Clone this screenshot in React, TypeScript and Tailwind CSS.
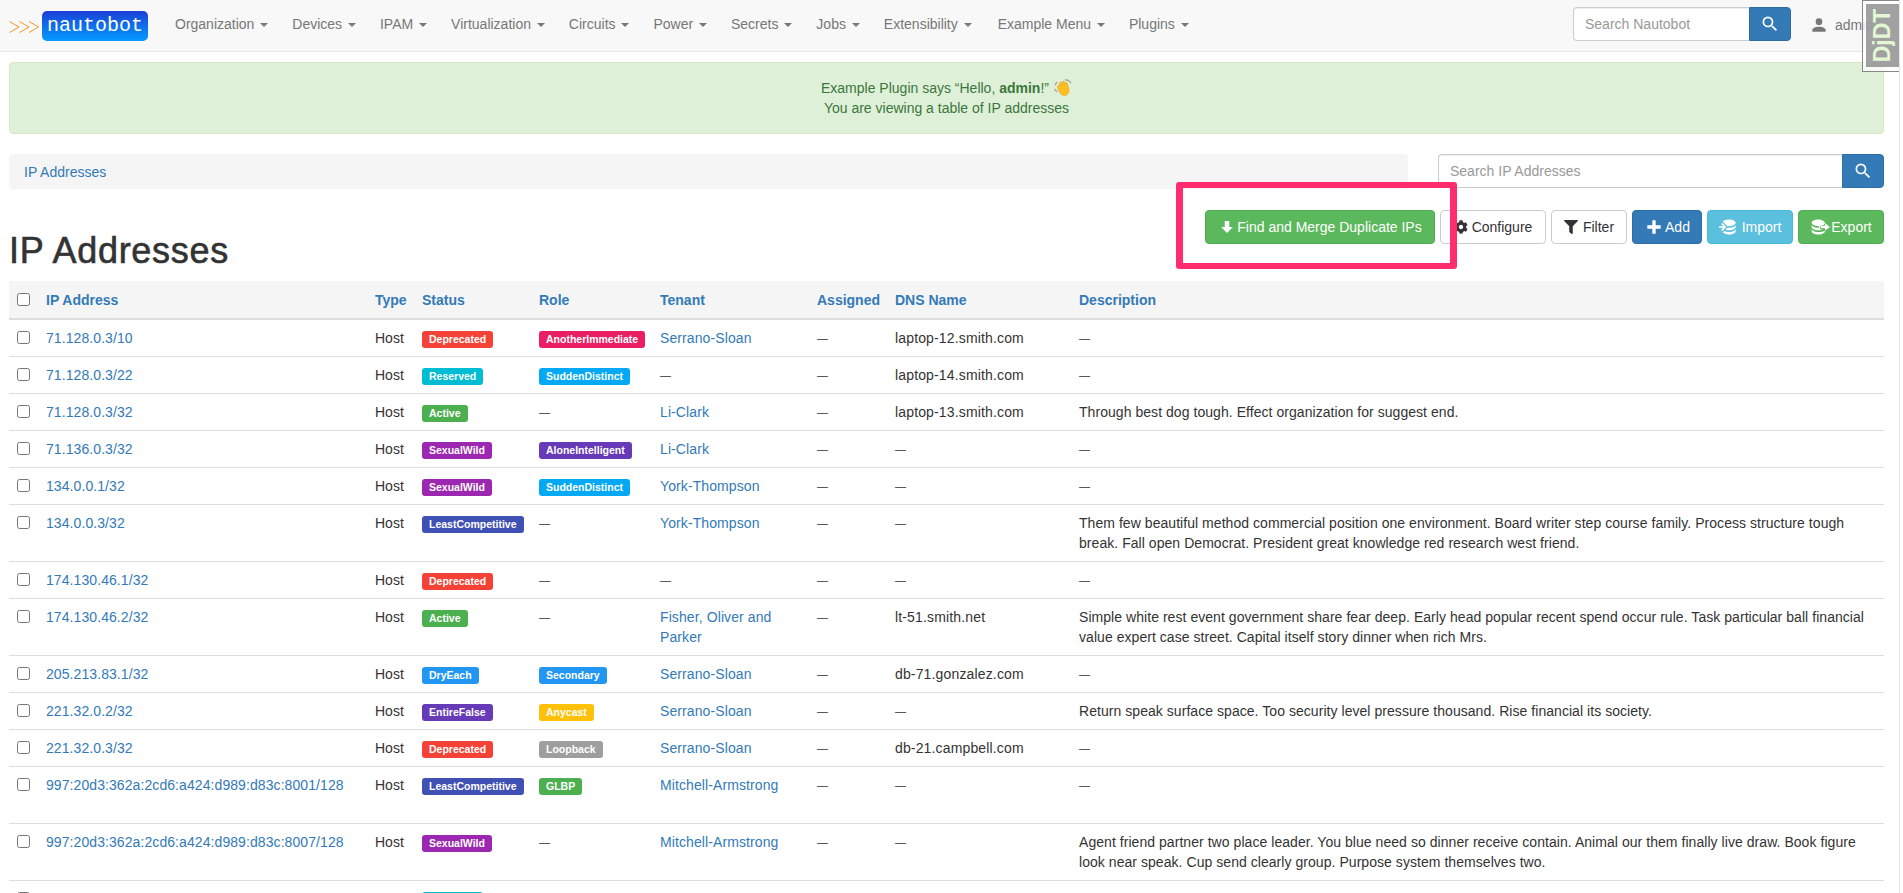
import { FaCog, FaFilter } from 'react-icons/fa'

const navItems = ['Organization', 'Devices', 'IPAM', 'Virtualization', 'Circuits', 'Power', 'Secrets', 'Jobs', 'Extensibility', 'Example Menu', 'Plugins']

const colors: Record<string, string> = {
  Deprecated: 'bg-[#f44336]',
  Reserved: 'bg-[#00bcd4]',
  Active: 'bg-[#4caf50]',
  SexualWild: 'bg-[#9c27b0]',
  LeastCompetitive: 'bg-[#3f51b5]',
  DryEach: 'bg-[#2196f3]',
  EntireFalse: 'bg-[#673ab7]',
  AnotherImmediate: 'bg-[#e91e63]',
  SuddenDistinct: 'bg-[#03a9f4]',
  AloneIntelligent: 'bg-[#673ab7]',
  Secondary: 'bg-[#2196f3]',
  Anycast: 'bg-[#ffc107] text-black',
  Loopback: 'bg-[#9e9e9e]',
  GLBP: 'bg-[#4caf50]',
}

type Row = { ip: string; status: string; role?: string; tenant?: string; dns?: string; desc?: string; tall?: boolean }

const rows: Row[] = [
  { ip: '71.128.0.3/10', status: 'Deprecated', role: 'AnotherImmediate', tenant: 'Serrano-Sloan', dns: 'laptop-12.smith.com' },
  { ip: '71.128.0.3/22', status: 'Reserved', role: 'SuddenDistinct', dns: 'laptop-14.smith.com' },
  { ip: '71.128.0.3/32', status: 'Active', tenant: 'Li-Clark', dns: 'laptop-13.smith.com', desc: 'Through best dog tough. Effect organization for suggest end.' },
  { ip: '71.136.0.3/32', status: 'SexualWild', role: 'AloneIntelligent', tenant: 'Li-Clark' },
  { ip: '134.0.0.1/32', status: 'SexualWild', role: 'SuddenDistinct', tenant: 'York-Thompson' },
  {
    ip: '134.0.0.3/32',
    status: 'LeastCompetitive',
    tenant: 'York-Thompson',
    desc: 'Them few beautiful method commercial position one environment. Board writer step course family. Process structure tough break. Fall open Democrat. President great knowledge red research west friend.',
  },
  { ip: '174.130.46.1/32', status: 'Deprecated' },
  {
    ip: '174.130.46.2/32',
    status: 'Active',
    tenant: 'Fisher, Oliver and Parker',
    dns: 'lt-51.smith.net',
    desc: 'Simple white rest event government share fear deep. Early head popular recent spend occur rule. Task particular ball financial value expert case street. Capital itself story dinner when rich Mrs.',
  },
  { ip: '205.213.83.1/32', status: 'DryEach', role: 'Secondary', tenant: 'Serrano-Sloan', dns: 'db-71.gonzalez.com' },
  { ip: '221.32.0.2/32', status: 'EntireFalse', role: 'Anycast', tenant: 'Serrano-Sloan', desc: 'Return speak surface space. Too security level pressure thousand. Rise financial its society.' },
  { ip: '221.32.0.3/32', status: 'Deprecated', role: 'Loopback', tenant: 'Serrano-Sloan', dns: 'db-21.campbell.com' },
  { ip: '997:20d3:362a:2cd6:a424:d989:d83c:8001/128', status: 'LeastCompetitive', role: 'GLBP', tenant: 'Mitchell-Armstrong', tall: true },
  {
    ip: '997:20d3:362a:2cd6:a424:d989:d83c:8007/128',
    status: 'SexualWild',
    tenant: 'Mitchell-Armstrong',
    desc: 'Agent friend partner two place leader. You blue need so dinner receive contain. Animal our them finally live draw. Book figure look near speak. Cup send clearly group. Purpose system themselves two.',
  },
]

const Mdi = ({ d, className }: { d: string; className: string }) => (
  <svg viewBox="0 0 24 24" fill="currentColor" className={className}>
    <path d={d} />
  </svg>
)

const magnify =
  'M9.5,3A6.5,6.5 0 0,1 16,9.5C16,11.11 15.41,12.59 14.44,13.73L14.71,14H15.5L20.5,19L19,20.5L14,15.5V14.71L13.73,14.44C12.59,15.41 11.11,16 9.5,16A6.5,6.5 0 0,1 3,9.5A6.5,6.5 0 0,1 9.5,3M9.5,5C7,5 5,7 5,9.5C5,12 7,14 9.5,14C12,14 14,12 14,9.5C14,7 12,5 9.5,5Z'
const account = 'M12,4A4,4 0 0,1 16,8A4,4 0 0,1 12,12A4,4 0 0,1 8,8A4,4 0 0,1 12,4M12,14C16.42,14 20,15.79 20,18V20H4V18C4,15.79 7.58,14 12,14Z'
const arrowDown = 'M9,4H15V12H19.84L12,19.84L4.16,12H9V4Z'
const plus = 'M20 14H14V20H10V14H4V10H10V4H14V10H20V14Z'
const dbImport =
  'M12,3C8.59,3 5.69,4.07 4.54,5.57L9.79,10.82C10.5,10.93 11.22,11 12,11C16.42,11 20,9.21 20,7C20,4.79 16.42,3 12,3M3.92,7.08L2.5,8.5L5,11H0V13H5L2.5,15.5L3.92,16.92L8.84,12M20,9C20,11.21 16.42,13 12,13C11.34,13 10.7,12.95 10.09,12.87L7.62,15.34C8.93,15.75 10.42,16 12,16C16.42,16 20,14.21 20,12M20,14C20,16.21 16.42,18 12,18C9.72,18 7.67,17.5 6.21,16.75L4.53,18.43C5.67,19.93 8.59,21 12,21C16.42,21 20,19.21 20,17'
const dbExport =
  'M10,3C5.58,3 2,4.79 2,7C2,9.21 5.58,11 10,11C11.6,11 13.1,10.76 14.35,10.35L14,9.5H16.5L18,7.6C17.6,5.1 14.2,3 10,3M2,9V12C2,14.21 5.58,16 10,16C11.2,16 12.35,15.87 13.4,15.63L14,14.5H12V10.9C11.35,10.97 10.68,13 10,13C5.58,13 2,11.21 2,9M2,14V17C2,19.21 5.58,21 10,21C14.42,21 18,19.21 18,17V16.5C15.9,17.5 13,18 10,18C5.58,18 2,16.21 2,14M18,7.5L24,12L18,16.5V13.5H13V10.5H18V7.5Z'

const Label = ({ name }: { name: string }) => (
  <span className={`flex h-[17px] w-fit items-center rounded-[3px] px-[7px] text-[10.5px] leading-none font-bold text-white ${colors[name]}`}>
    {name}
  </span>
)

const Wave = () => (
  <svg viewBox="0 0 18 18" className="ml-[5px] inline-block h-[18px] w-[18px] align-[-4px]">
    <path d="M1 6 L3 3 M0.5 10 L3 13 M11 0.5 L14 1.5 M14 1 L17 4" stroke="#a8a8a8" strokeWidth="1.4" fill="none" />
    <path
      d="M4 6.5 C5 5.5 6 6 6.5 7 L5.5 4.2 C5.5 3 7 2.6 7.6 3.8 L8.8 6 L8.4 3 C8.5 1.8 10 1.7 10.4 2.8 L11.2 6 L11.4 4 C11.7 3 13 3.1 13.2 4.2 C13.8 7 15 9 15 11.5 C15 15 12 17 9.5 16.5 C7 16 5.6 13.5 4.6 11.5 L3.4 8 C3.2 7.2 3.5 6.8 4 6.5 Z"
      fill="#fbbf24"
      stroke="#e09a0c"
      strokeWidth="0.5"
    />
  </svg>
)

const ToolButton = ({ className, icon, label }: { className: string; icon: React.ReactNode; label: string }) => (
  <a className={`flex h-[34px] items-center justify-center gap-[1px] rounded border text-sm ${className}`}>
    {icon}
    {label}
  </a>
)

const SearchBox = ({ placeholder, className }: { placeholder: string; className: string }) => (
  <div className={`flex h-[34px] ${className}`}>
    <div className="flex flex-1 items-center rounded-l border border-r-0 border-[#ccc] bg-white px-[11px] text-sm text-[#999] shadow-[inset_0_1px_1px_rgba(0,0,0,0.075)]">
      {placeholder}
    </div>
    <a className="flex w-[42px] items-center justify-center rounded-r border border-[#2e6da4] bg-[#337ab7] text-white">
      <Mdi d={magnify} className="size-5" />
    </a>
  </div>
)

const Dash = () => <span className="block h-5 text-[11px] leading-5 text-[#333]">—</span>

export default function App() {
  return (
    <div className="flex h-[893px] overflow-hidden bg-white font-['Liberation_Sans',Arial,sans-serif] text-sm leading-5 text-[#333]">
      <div className="relative min-w-0 flex-1">
        <header className="flex h-[52px] items-center border-b border-[#e7e7e7] bg-[#f8f8f8] pr-[15px] pl-[9px]">
          <svg viewBox="0 0 30 12" className="mt-[3px] h-3 w-[30px] text-[#f7941d]" fill="none" stroke="currentColor" strokeWidth="1">
            <path d="M0.5 0.5 L10 6 L0.5 11.5 M10.5 0.5 L20 6 L10.5 11.5 M20 0.5 L29.5 6 L20 11.5" />
          </svg>
          <div className="ml-[3px] flex h-[30px] w-[106px] items-center justify-center rounded-[5px] bg-gradient-to-b from-[#1c3cd6] to-[#0a9bff] font-['Liberation_Mono',monospace] text-xl leading-none text-white">
            nautobot
          </div>
          <nav className="mb-[3px] ml-[15px] flex text-[#777]">
            {navItems.map(item => (
              <a key={item} className={`pl-3 whitespace-nowrap ${item === 'Extensibility' ? 'pr-[14px]' : 'pr-3'}`}>
                {item}{' '}
                <span className="ml-0.5 inline-block h-0 w-0 border-x-4 border-t-4 border-x-transparent border-t-current align-middle" />
              </a>
            ))}
          </nav>
          <SearchBox placeholder="Search Nautobot" className="mb-1 ml-auto w-[218px]" />
          <div className="mb-[1px] ml-[18px] flex w-[75px] items-center text-[#777]">
            <Mdi d={account} className="size-5 shrink-0" />
            <span className="ml-[6px]">admin</span>
          </div>
        </header>

        <div className="absolute top-0 right-0 z-20 h-[72px] w-[37px] border-y border-l border-[#888] bg-white/75 pt-[3px] pb-[4px] pl-[3px]">
          <div className="flex h-full items-center justify-center bg-[#8a8a8a]/80">
            <span className="-rotate-90 text-[23px] leading-none font-bold whitespace-nowrap text-[#e2f7d2]">DjDT</span>
          </div>
        </div>

        <main className="pt-[10px] pr-[15px] pl-[9px]">
          <div className="rounded border border-[#d6e9c6] bg-[#dff0d8] py-[15px] text-center text-[#3c763d]">
            <p>
              Example Plugin says “Hello, <b>admin</b>!”
              <Wave />
            </p>
            <p>You are viewing a table of IP addresses</p>
          </div>

          <div className="mt-5 flex gap-[30px]">
            <div className="flex h-[35px] flex-1 items-center rounded bg-[#f5f5f5] px-[15px]">
              <a className="text-[#337ab7]">IP Addresses</a>
            </div>
            <SearchBox placeholder="Search IP Addresses" className="w-[446px]" />
          </div>

          <div className="mt-[21px] flex items-start justify-between">
            <h1 className="pt-[21px] text-4xl leading-[39.6px] font-medium tracking-[0.7px] [-webkit-text-stroke:0.6px_#333]">IP Addresses</h1>
            <div className="flex gap-[5px]">
              <ToolButton
                className="w-[230px] border-[#4cae4c] bg-[#5cb85c] text-white"
                icon={<Mdi d={arrowDown} className="size-[18px]" />}
                label="Find and Merge Duplicate IPs"
              />
              <ToolButton className="w-[106px] border-[#ccc] bg-white" icon={<FaCog className="mr-[3px] size-[14px]" />} label="Configure" />
              <ToolButton className="w-[76px] border-[#ccc] bg-white" icon={<FaFilter className="mr-[4px] size-[14px]" />} label="Filter" />
              <ToolButton className="w-[70px] border-[#2e6da4] bg-[#337ab7] text-white" icon={<Mdi d={plus} className="size-5" />} label="Add" />
              <ToolButton className="w-[86px] border-[#46b8da] bg-[#5bc0de] text-white" icon={<Mdi d={dbImport} className="mr-[2px] size-5" />} label="Import" />
              <ToolButton className="w-[86px] border-[#4cae4c] bg-[#5cb85c] text-white" icon={<Mdi d={dbExport} className="size-5" />} label="Export" />
            </div>
          </div>

          <table className="mt-[10px] w-full table-fixed border-collapse">
            <colgroup>
              <col className="w-[29px]" />
              <col className="w-[329px]" />
              <col className="w-[47px]" />
              <col className="w-[117px]" />
              <col className="w-[121px]" />
              <col className="w-[157px]" />
              <col className="w-[78px]" />
              <col className="w-[184px]" />
              <col />
            </colgroup>
            <thead>
              <tr className="border-b-2 border-[#ddd] bg-[#f5f5f5] text-left font-bold text-[#337ab7]">
                <th className="px-2 pt-[9px] pb-2 align-top">
                  <input type="checkbox" className="mt-[3px] block" />
                </th>
                {['IP Address', 'Type', 'Status', 'Role', 'Tenant', 'Assigned', 'DNS Name', 'Description'].map(h => (
                  <th key={h} className="px-2 pt-[9px] pb-2 align-top whitespace-nowrap">
                    {h}
                  </th>
                ))}
              </tr>
            </thead>
            <tbody>
              {rows.map(row => (
                <tr key={row.ip} className={`border-b border-[#ddd] align-top ${row.tall ? 'h-[57px]' : ''}`}>
                  <td className="p-2">
                    <input type="checkbox" className="mt-[3px] block" />
                  </td>
                  <td className="p-2 tracking-[0.08px] whitespace-nowrap text-[#337ab7]">{row.ip}</td>
                  <td className="p-2">Host</td>
                  <td className="p-2 pt-[11px] whitespace-nowrap">
                    <Label name={row.status} />
                  </td>
                  <td className={`p-2 whitespace-nowrap ${row.role ? 'pt-[11px]' : ''}`}>{row.role ? <Label name={row.role} /> : <Dash />}</td>
                  <td className="p-2 tracking-[0.1px] text-[#337ab7]">{row.tenant ?? <Dash />}</td>
                  <td className="p-2">
                    <Dash />
                  </td>
                  <td className="p-2 tracking-[0.15px] whitespace-nowrap">{row.dns ?? <Dash />}</td>
                  <td className="p-2 tracking-[0.05px]">{row.desc ?? <Dash />}</td>
                </tr>
              ))}
              {/* only the top edge of this row is on screen */}
              <tr className="align-top">
                <td className="p-2">
                  <input type="checkbox" className="mt-[3px] block" />
                </td>
                <td colSpan={2} />
                <td className="p-2 pt-[11px]">
                  <Label name="Reserved" />
                </td>
                <td colSpan={5} />
              </tr>
            </tbody>
          </table>
        </main>

        <div className="absolute top-[182px] left-[1176px] z-10 h-[87px] w-[281px] rounded-[3px] border-x-[7px] border-y-[6px] border-[#ff2d6e]" />
      </div>
      <div className="w-[4px] shrink-0 border-l border-[#e5e5e5]" />
    </div>
  )
}
